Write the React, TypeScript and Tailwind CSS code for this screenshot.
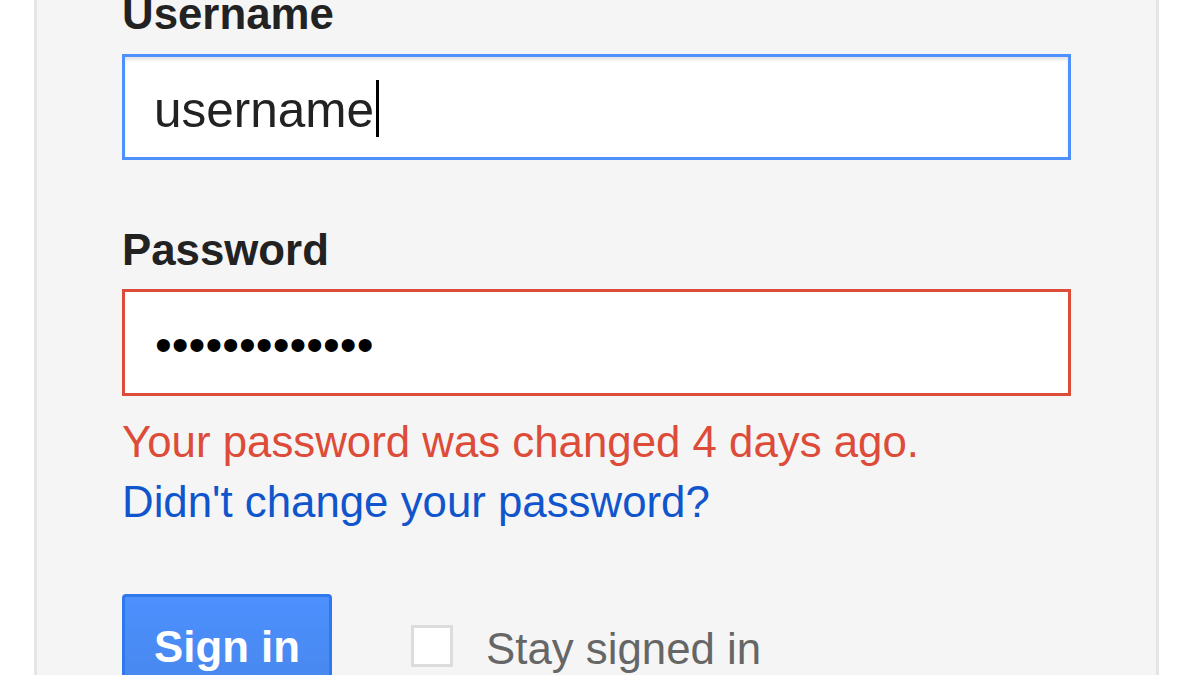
export default function App() {
  return (
    <div className="w-[1200px] h-[675px] overflow-hidden bg-white font-['Liberation_Sans',Arial,sans-serif]">
      {/* zoomed sign-in card */}
      <div className="flow-root ml-[34px] w-[1125px] h-full border-x-[3px] border-[#e5e5e5] bg-[#f5f5f5] pl-[85px]">
        <div className="w-[949px]">
          <label className="block -mt-[11px] h-[49px] text-[43.8px] leading-[49px] font-bold text-[#222]">
            Username
          </label>
          <div className="mt-[16px] h-[106px] border-[3px] border-[#4d90fe] bg-white shadow-[inset_0_3px_3px_rgba(0,0,0,0.1)] flex items-start pt-[25px] pl-[29px]">
            <span className="text-[49.5px] leading-[55px] text-[#222]">username</span>
            <span className="ml-[2px] -mt-[2px] w-[3px] h-[57px] bg-black" />
          </div>

          <label className="block mt-[65px] h-[49px] text-[43.8px] leading-[49px] font-bold text-[#222]">
            Password
          </label>
          <div className="mt-[15px] h-[107px] border-[3px] border-[#dd4b39] bg-white pt-[25px] pl-[30px]">
            <span className="block text-[48px] leading-[55px] text-black">•••••••••••••</span>
          </div>

          <div className="mt-[16px] text-[43.8px] leading-[60px]">
            <p className="text-[#dd4b39]">Your password was changed 4 days ago.</p>
            <a className="block text-[#15c]">Didn't change your password?</a>
          </div>

          <div className="mt-[62px] flex items-start">
            <button className="flex items-start justify-center w-[210px] h-[100px] rounded-t-[4px] border-[3px] border-[#3079ed] bg-gradient-to-b from-[#4d90fe] to-[#4787ed] pt-[25px] text-[43.8px] leading-[49px] font-bold text-white">
              Sign in
            </button>
            <div className="ml-[79px] mt-[31px] w-[42px] h-[42px] border-[3px] border-[#dcdcdc] bg-white" />
            <span className="ml-[33px] mt-[30px] text-[43.8px] leading-[49px] text-[#666]">
              Stay signed in
            </span>
          </div>
        </div>
      </div>
    </div>
  );
}
